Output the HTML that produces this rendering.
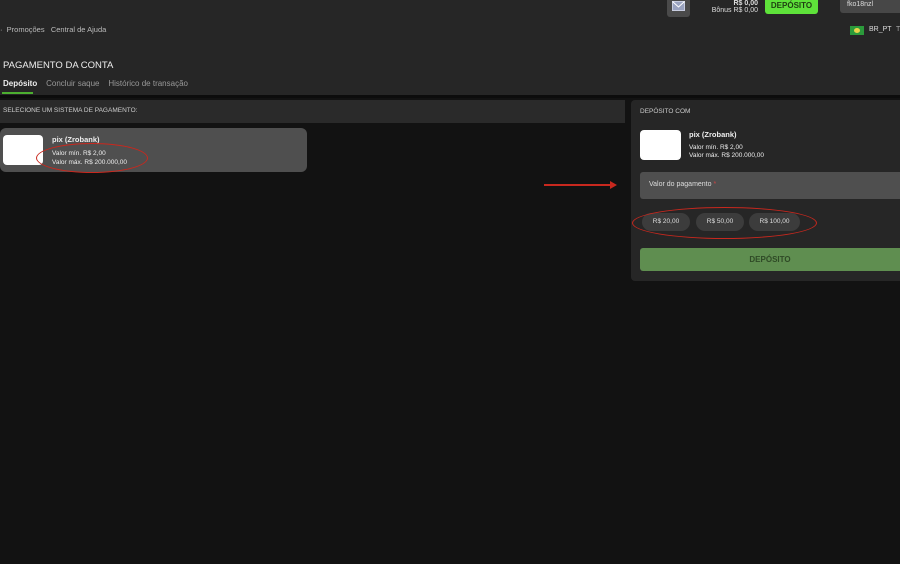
<!DOCTYPE html>
<html><head><meta charset="utf-8"><style>
*{margin:0;padding:0;box-sizing:border-box}
body{width:900px;height:564px;overflow:hidden;background:#121212;font-family:"Liberation Sans",sans-serif;color:#ddd;position:relative}
.a{position:absolute}
</style></head><body>
<div class="a" style="left:0;top:0;width:900px;height:95px;background:#262626"></div>
<div class="a" style="left:0;top:95px;width:900px;height:3px;background:#0c0c0c"></div>
<div class="a" style="left:667px;top:0;width:23px;height:17px;background:#4a4a4a;border-radius:0 0 3px 3px"></div>
<svg class="a" style="left:672px;top:1px" width="13" height="11"><rect x="0.5" y="0.5" width="12" height="9" fill="#9aa3c0" stroke="#c8cde0"/><path d="M0.5 0.5L6.5 6L12.5 0.5" stroke="#fff" fill="none"/></svg>
<div class="a" style="left:700px;top:0;width:58px;font-size:7px;text-align:right;line-height:7px;color:#ddd"><b>R$ 0,00</b><br>Bônus R$ 0,00</div>
<div class="a" style="left:765px;top:0;width:53px;height:14px;background:#5ee23a;border-radius:0 0 3px 3px;color:#1f3f12;font-size:8px;font-weight:bold;text-align:center;line-height:12px">DEPÓSITO</div>
<div class="a" style="left:840px;top:0;width:60px;height:13px;background:#474747;border-radius:0 0 0 3px;font-size:7px;color:#ddd;padding-left:7px;line-height:10px">fko18nzl</div>
<div class="a" style="left:850px;top:26px;width:14px;height:9px;background:#2b9a3b"><div style="margin:2px 4px;width:6px;height:5px;background:#e8d34a;border-radius:50%"></div></div>
<div class="a" style="left:869px;top:26px;font-size:7px;color:#ddd">BR_PT</div>
<div class="a" style="left:896px;top:26px;font-size:7px;color:#aaa">T</div>
<div class="a" style="left:0;top:25px;font-size:7.5px;color:#bbb">·&nbsp; Promoções &nbsp; Central de Ajuda</div>
<div class="a" style="left:3px;top:60px;font-size:9.5px;color:#eee">PAGAMENTO DA CONTA</div>
<div class="a" style="left:3px;top:79px;font-size:8px;color:#999"><b style="color:#eee">Depósito</b>&nbsp;&nbsp;&nbsp; Concluir saque &nbsp;&nbsp; Histórico de transação</div>
<div class="a" style="left:2px;top:92px;width:31px;height:2px;background:#4caf30"></div>
<div class="a" style="left:0;top:100px;width:625px;height:23px;background:#2a2a2a"></div>
<div class="a" style="left:3px;top:107px;font-size:6.5px;color:#ccc">SELECIONE UM SISTEMA DE PAGAMENTO:</div>
<div class="a" style="left:0;top:128px;width:307px;height:44px;background:#4f4f4f;border-radius:6px"></div>
<div class="a" style="left:3px;top:135px;width:40px;height:30px;background:#fff;border-radius:4px"></div>
<div class="a" style="left:52px;top:135px;font-size:7.5px;font-weight:bold;color:#eee">pix (Zrobank)</div>
<div class="a" style="left:52px;top:149px;font-size:6.5px;color:#eee;line-height:9px">Valor mín. R$ 2,00<br>Valor máx. R$ 200.000,00</div>
<div class="a" style="left:36px;top:143px;width:112px;height:30px;border:1.5px solid #c8281e;border-radius:50%"></div>
<div class="a" style="left:544px;top:184px;width:70px;height:1.5px;background:#c8281e"></div>
<div class="a" style="left:610px;top:181px;border-left:7px solid #c8281e;border-top:4px solid transparent;border-bottom:4px solid transparent"></div>
<div class="a" style="left:631px;top:100px;width:269px;height:181px;background:#262626;border-radius:4px 0 0 4px"></div>
<div class="a" style="left:640px;top:108px;font-size:6.5px;color:#ccc">DEPÓSITO COM</div>
<div class="a" style="left:640px;top:130px;width:41px;height:30px;background:#fff;border-radius:4px"></div>
<div class="a" style="left:689px;top:130px;font-size:7.5px;font-weight:bold;color:#eee">pix (Zrobank)</div>
<div class="a" style="left:689px;top:144px;font-size:6.5px;color:#eee;line-height:8px">Valor mín. R$ 2,00<br>Valor máx. R$ 200.000,00</div>
<div class="a" style="left:640px;top:172px;width:260px;height:27px;background:#4f4f4f;border-radius:3px 0 0 3px"></div>
<div class="a" style="left:649px;top:181px;font-size:7px;color:#ddd">Valor do pagamento <span style="color:#c44">*</span></div>
<div class="a" style="left:642px;top:213px;width:48px;height:18px;background:#3c3c3c;border-radius:9px;font-size:6.5px;color:#ddd;text-align:center;line-height:18px">R$ 20,00</div>
<div class="a" style="left:696px;top:213px;width:48px;height:18px;background:#3c3c3c;border-radius:9px;font-size:6.5px;color:#ddd;text-align:center;line-height:18px">R$ 50,00</div>
<div class="a" style="left:749px;top:213px;width:51px;height:18px;background:#3c3c3c;border-radius:9px;font-size:6.5px;color:#ddd;text-align:center;line-height:18px">R$ 100,00</div>
<div class="a" style="left:632px;top:207px;width:185px;height:32px;border:1.5px solid #c8281e;border-radius:50%"></div>
<div class="a" style="left:640px;top:248px;width:260px;height:23px;background:#5f8e50;border-radius:3px 0 0 3px;font-size:8px;font-weight:bold;color:#2f4a26;text-align:center;line-height:23px">DEPÓSITO</div>
</body></html>
